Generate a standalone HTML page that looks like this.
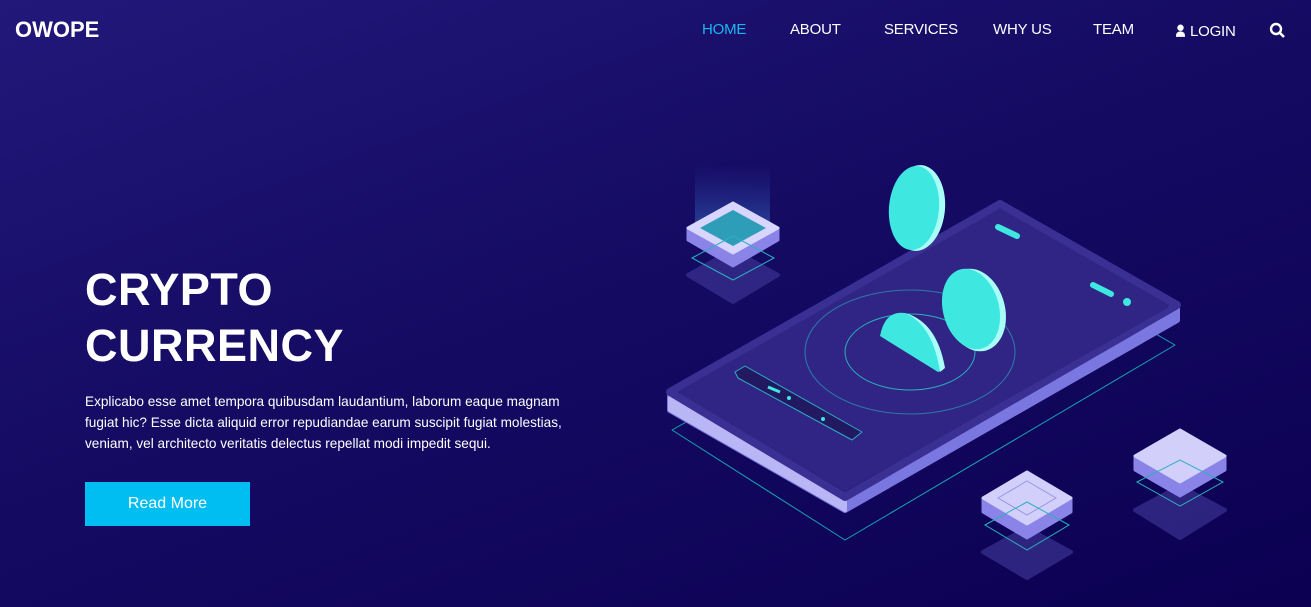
<!DOCTYPE html>
<html><head><style>
*{margin:0;padding:0;box-sizing:border-box}
body{width:1311px;height:607px;overflow:hidden;font-family:"Liberation Sans",sans-serif;background:linear-gradient(160deg,#21187a 0%,#150b63 45%,#0b0052 100%);position:relative;color:#fff}
.logo{position:absolute;left:15px;top:17px;font-size:22px;font-weight:bold}
.nav a{position:absolute;top:21px;font-size:15px;color:#fff;text-decoration:none;letter-spacing:-0.2px}
h1{position:absolute;left:85px;top:262px;font-size:45px;line-height:56px;font-weight:bold;letter-spacing:0.5px}
p{position:absolute;left:85px;top:391px;width:510px;font-size:13.6px;line-height:21px}
.btn{position:absolute;left:85px;top:482px;width:165px;height:44px;background:#00bdf2;color:#fff;font-size:16px;text-align:center;line-height:44px}
svg{position:absolute;left:0;top:0}
</style></head><body>
<div class="logo">OWOPE</div>
<div class="nav">
<a style="left:702px;color:#19b7f0">HOME</a>
<a style="left:790px">ABOUT</a>
<a style="left:884px">SERVICES</a>
<a style="left:993px">WHY US</a>
<a style="left:1093px">TEAM</a>
<a style="left:1175px"><svg width="11" height="15" viewBox="0 0 12 16" style="position:relative;top:2px"><circle cx="6" cy="5" r="3.5" fill="#fff"/><path d="M1 15 Q1 9 6 9 Q11 9 11 15Z" fill="#fff"/></svg> LOGIN</a>
</div>
<svg width="1311" height="607" style="pointer-events:none">
<defs><linearGradient id="g" x1="0" y1="0" x2="0" y2="1"><stop offset="0" stop-color="#3050b0" stop-opacity="0"/><stop offset="1" stop-color="#3a70c8" stop-opacity=".5"/></linearGradient></defs>
<circle cx="1276" cy="29" r="5" stroke="#fff" stroke-width="2.4" fill="none"/><line x1="1280" y1="33" x2="1284" y2="37" stroke="#fff" stroke-width="2.6"/>
<path d="M672 430 L1000 245 L1175 345 L845 540 Z" fill="none" stroke="#1aa2b5" stroke-width="1" stroke-linejoin="round"/>
<path d="M670 395 L1000 208 L1177 308 L1177 320 L845 510 L670 410 Z" fill="#7a78e0" stroke="#7a78e0" stroke-width="6" stroke-linejoin="round"/>
<path d="M670 398 L845 498 L845 510 L670 410Z" fill="#b8b6f5" stroke="#b8b6f5" stroke-width="4" stroke-linejoin="round"/>
<path d="M670 392 L1000 204 L1177 305 L845 497 Z" fill="#2a1e7a" stroke="#3a2f92" stroke-width="8" stroke-linejoin="round"/>
<path d="M683 392 L1000 212 L1165 306 L845 488 Z" fill="#302484" stroke="#302484" stroke-width="6" stroke-linejoin="round"/>
<ellipse cx="910" cy="352" rx="105" ry="62" fill="none" stroke="#2b7aa8" stroke-width="1"/>
<ellipse cx="910" cy="352" rx="65" ry="38" fill="none" stroke="#2ab0c0" stroke-width="1"/>
<path d="M735 372 L745 366 L862 432 L852 440 L738 378Z" fill="#231862" stroke="#2bb0c0" stroke-linejoin="round"/>
<line x1="768" y1="387" x2="780" y2="392" stroke="#3ee8e0" stroke-width="3"/>
<circle cx="789" cy="398" r="2" fill="#3ee8e0"/><circle cx="823" cy="419" r="2" fill="#3ee8e0"/>
<line x1="998" y1="227" x2="1017" y2="236" stroke="#3ee8e0" stroke-width="6" stroke-linecap="round"/>
<line x1="1093" y1="285" x2="1111" y2="294" stroke="#3ee8e0" stroke-width="6" stroke-linecap="round"/>
<circle cx="1127" cy="302" r="4" fill="#3ee8e0"/>
<ellipse cx="918" cy="208" rx="27" ry="43" fill="#a9fff8" transform="rotate(5 918 208)"/>
<ellipse cx="914" cy="208" rx="25" ry="42" fill="#3ee8e0" transform="rotate(5 914 208)"/>
<ellipse cx="975" cy="310" rx="30" ry="42" fill="#a9fff8" transform="rotate(-15 975 310)"/>
<ellipse cx="971" cy="309" rx="28" ry="41" fill="#3ee8e0" transform="rotate(-15 971 309)"/>
<path d="M880 336 Q885 310 905 313 Q935 322 943 370 L938 372 Z" fill="#3ee8e0"/>
<path d="M905 313 Q937 322 945 368 L940 372 Q933 325 905 313Z" fill="#a9fff8"/>
<rect x="695" y="165" width="75" height="60" fill="url(#g)"/>
<path d="M688 275 L733 250 L778 275 L733 302Z" fill="#3a3290" opacity=".7" stroke="#3a3290" stroke-width="4" stroke-linejoin="round"/>
<path d="M688 228 L733 203 L778 228 L778 240 L733 266 L688 240Z" fill="#8a84e8" stroke="#8a84e8" stroke-width="3" stroke-linejoin="round"/>
<path d="M688 228 L733 203 L778 228 L733 253Z" fill="#d8d6ff" stroke="#d8d6ff" stroke-width="3" stroke-linejoin="round"/>
<path d="M700 228 L733 210 L766 228 L733 246Z" fill="#2e9db8"/>
<path d="M692 258 L733 236 L774 258 L733 280Z" fill="none" stroke="#2bb0c0"/>
<path d="M983 552 L1027 528 L1071 552 L1027 578Z" fill="#3a3290" opacity=".7" stroke="#3a3290" stroke-width="4" stroke-linejoin="round"/>
<path d="M983 498 L1027 472 L1071 498 L1071 512 L1027 538 L983 512Z" fill="#8a84e8" stroke="#8a84e8" stroke-width="3" stroke-linejoin="round"/>
<path d="M983 498 L1027 472 L1071 498 L1027 524Z" fill="#d2d0fb" stroke="#d2d0fb" stroke-width="3" stroke-linejoin="round"/>
<path d="M998 498 L1027 481 L1056 498 L1027 515Z" fill="none" stroke="#9a96e8"/>
<path d="M985 525 L1027 502 L1069 525 L1027 550Z" fill="none" stroke="#2bb0c0"/>
<path d="M1135 510 L1180 486 L1225 510 L1180 538Z" fill="#3a3290" opacity=".7" stroke="#3a3290" stroke-width="4" stroke-linejoin="round"/>
<path d="M1135 456 L1180 430 L1225 456 L1225 470 L1180 496 L1135 470Z" fill="#8a84e8" stroke="#8a84e8" stroke-width="3" stroke-linejoin="round"/>
<path d="M1135 456 L1180 430 L1225 456 L1180 482Z" fill="#d2d0fb" stroke="#d2d0fb" stroke-width="3" stroke-linejoin="round"/>
<path d="M1137 482 L1180 460 L1223 482 L1180 506Z" fill="none" stroke="#2bb0c0"/>
</svg>
<h1>CRYPTO<br>CURRENCY</h1>
<p>Explicabo esse amet tempora quibusdam laudantium, laborum eaque magnam fugiat hic? Esse dicta aliquid error repudiandae earum suscipit fugiat molestias, veniam, vel architecto veritatis delectus repellat modi impedit sequi.</p>
<div class="btn">Read More</div>
</body></html>
